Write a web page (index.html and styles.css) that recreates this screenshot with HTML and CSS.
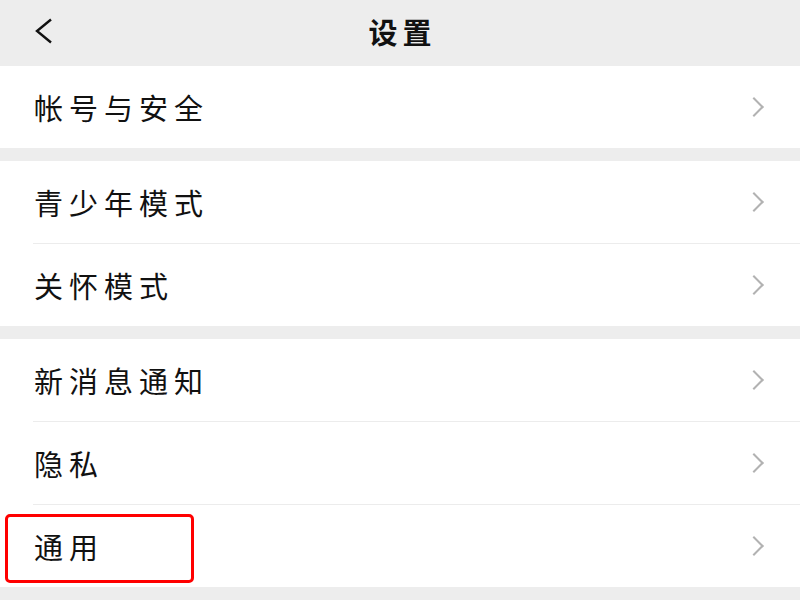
FILE: index.html
```html
<!DOCTYPE html>
<html lang="zh-CN">
<head>
  <meta charset="UTF-8" />
  <meta name="viewport" content="width=device-width, initial-scale=1.0"/>
  <title>设置</title>
  <link rel="stylesheet" href="styles.css">
</head>
<body>

  <div class="top-bar">
    <a href="#" class="back-button">
      <svg width="20" height="26" viewBox="0 0 20 26"><path d="M17 1.5 L3 13 L17 24.5" fill="none" stroke="#111" stroke-width="2.4"/></svg>
    </a>
    <h2 class="title">设置</h2>
  </div>

  <div class="group">
    <div class="row"><span class="label">帐号与安全</span><span class="arrow"></span></div>
  </div>

  <div class="group">
    <div class="row"><span class="label">青少年模式</span><span class="arrow"></span></div>
    <div class="row"><span class="label">关怀模式</span><span class="arrow"></span></div>
  </div>

  <div class="group">
    <div class="row"><span class="label">新消息通知</span><span class="arrow"></span></div>
    <div class="row"><span class="label">隐私</span><span class="arrow"></span></div>
    <div class="row highlighted"><span class="label">通用</span><span class="arrow"></span></div>
  </div>

</body>
</html>
```

FILE: styles.css
```css
body {
  font-family: "Noto Sans CJK SC", "Noto Sans", sans-serif;
  background: #ededed;
  margin: 0;
  color: #111;
}

.top-bar {
  position: relative;
  height: 66px;
  display: flex;
  align-items: center;
  justify-content: center;
}

.back-button {
  position: absolute;
  left: 34px;
  top: 18px;
  display: block;
  line-height: 0;
}

.title {
  margin: -4px -5px 0 0;
  font-size: 29px;
  font-weight: bold;
  letter-spacing: 5px;
}

.group {
  background: #fff;
  margin-bottom: 13px;
}

.row {
  position: relative;
  height: 82px;
  display: flex;
  align-items: center;
  justify-content: space-between;
  padding: 0 36px 0 34px;
}

.row + .row {
  border-top: 1px solid transparent;
}

.row + .row::before {
  content: "";
  position: absolute;
  left: 33px;
  right: 0;
  top: -1px;
  height: 1px;
  background: #ececec;
}

.label {
  font-size: 29px;
  letter-spacing: 6px;
}

.arrow {
  width: 12px;
  height: 12px;
  border-top: 2px solid #b2b2b2;
  border-right: 2px solid #b2b2b2;
  transform: rotate(45deg);
  margin-right: 3px;
}

.highlighted::after {
  content: "";
  position: absolute;
  left: 5px;
  top: 9px;
  width: 183px;
  height: 63px;
  border: 3px solid #f00;
  border-radius: 5px;
}
```
